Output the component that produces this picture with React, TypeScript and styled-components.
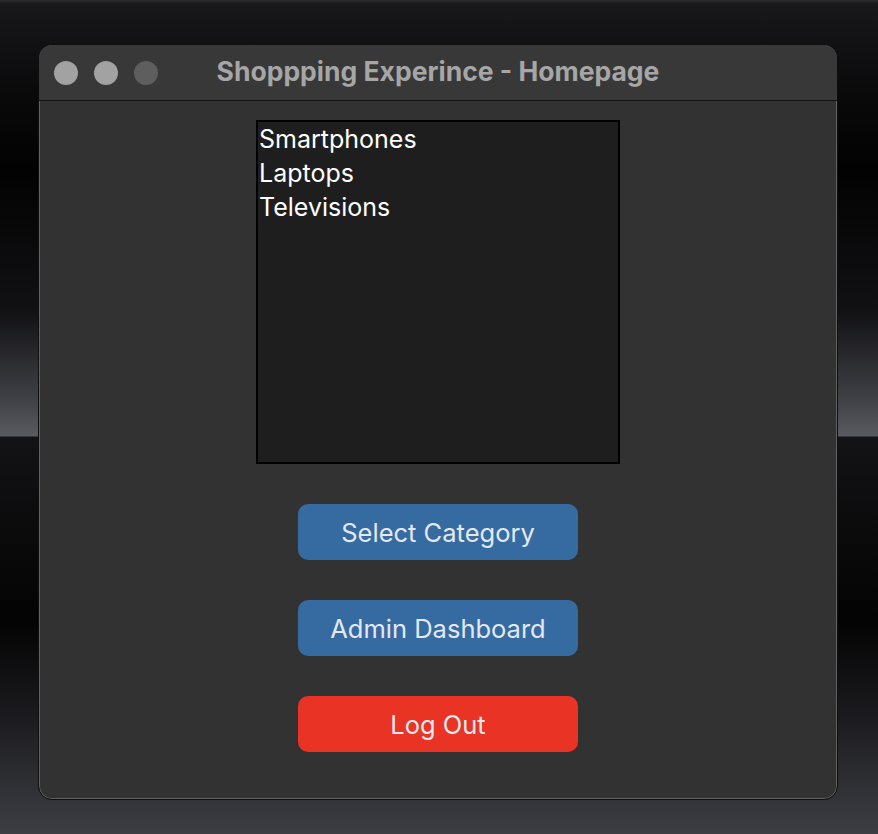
import React from "react";
import styled, { createGlobalStyle } from "styled-components";

const Global = createGlobalStyle`
  html, body { margin: 0; padding: 0; }
  body {
    width: 878px;
    height: 834px;
    overflow: hidden;
    font-family: "Inter", "Liberation Sans", sans-serif;
    background:
      linear-gradient(to bottom,
        #2c2c30 0px, #18181b 4px, #0a0a0b 90px, #020202 170px,
        #111114 310px, #404146 400px, #5a5b61 436px,
        #131316 437px, #0c0c0d 520px, #030303 620px,
        #1c1c20 720px, #3d3e43 834px);
  }
`;

const Desktop = styled.div`
  width: 878px;
  height: 834px;
  padding: 44px 0 0 38px;
  box-sizing: border-box;
  display: flex;
  align-items: flex-start;
`;

const Window = styled.div`
  width: 800px;
  height: 756px;
  box-sizing: border-box;
  border-radius: 14px;
  background: #323232;
  border: 1px solid #0e0e0e;
  box-shadow: inset 0 0 0 1px #626262;
  display: flex;
  flex-direction: column;
  overflow: hidden;
`;

const TitleBar = styled.div`
  height: 55px;
  flex: none;
  display: flex;
  align-items: center;
  position: relative;
  background: #383838;
  border-bottom: 1px solid #111111;
  padding-left: 15px;
  gap: 16px;
`;

const Light = styled.span<{ $dim?: boolean }>`
  width: 24px;
  height: 24px;
  border-radius: 50%;
  background: ${(p) => (p.$dim ? "#5e5e5e" : "#a2a2a2")};
`;

const Title = styled.div`
  position: absolute;
  left: 0;
  right: 0;
  top: 9px;
  text-align: center;
  font-family: "Inter", "Liberation Sans", sans-serif;
  font-weight: 700;
  font-size: 26.5px;
  line-height: 34px;
  color: #a6a6a6;
  pointer-events: none;
`;

const Content = styled.div`
  flex: 1;
  display: flex;
  flex-direction: column;
  align-items: center;
  padding-top: 19px;
`;

const ListBox = styled.div`
  width: 364px;
  height: 344px;
  box-sizing: border-box;
  border: 2px solid #000;
  background: #1e1e1e;
  padding: 0 1px;
  display: flex;
  flex-direction: column;
`;

const ListItem = styled.div`
  font-family: "Inter", "Liberation Sans", sans-serif;
  font-size: 25px;
  line-height: 34px;
  color: #ffffff;
`;

const Buttons = styled.div`
  display: flex;
  flex-direction: column;
  gap: 40px;
  margin-top: 40px;
`;

const Button = styled.button<{ $danger?: boolean }>`
  width: 280px;
  height: 56px;
  border: none;
  border-radius: 10px;
  background: ${(p) => (p.$danger ? "#e83325" : "#366ba2")};
  color: #e4e8f0;
  font-family: "Inter", "Liberation Sans", sans-serif;
  font-size: 25.5px;
  padding: 0;
  cursor: pointer;
`;

export default function App() {
  return (
    <>
      <Global />
      <Desktop>
        <Window>
          <TitleBar>
            <Light />
            <Light />
            <Light $dim />
            <Title>Shoppping Experince - Homepage</Title>
          </TitleBar>
          <Content>
            <ListBox>
              <ListItem>Smartphones</ListItem>
              <ListItem>Laptops</ListItem>
              <ListItem>Televisions</ListItem>
            </ListBox>
            <Buttons>
              <Button>Select Category</Button>
              <Button>Admin Dashboard</Button>
              <Button $danger>Log Out</Button>
            </Buttons>
          </Content>
        </Window>
      </Desktop>
    </>
  );
}
